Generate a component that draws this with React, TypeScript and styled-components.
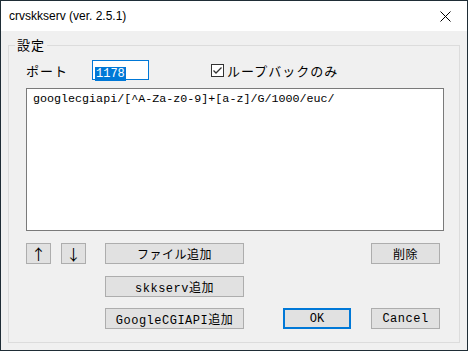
import React from "react";
import styled, { createGlobalStyle } from "styled-components";

const GlobalStyle = createGlobalStyle`
  html, body {
    margin: 0;
    padding: 0;
    background: #f0f0f0;
  }
  * {
    box-sizing: border-box;
  }
`;

const jpFont = `"Noto Sans CJK JP", "Noto Sans", sans-serif`;
const monoFont = `"Liberation Mono", "Noto Sans CJK JP", monospace`;

const Window = styled.div`
  width: 468px;
  height: 351px;
  border: 1px solid #1f2d36;
  display: flex;
  flex-direction: column;
  background: #f0f0f0;
`;

const TitleBar = styled.div`
  height: 30px;
  background: #ffffff;
  display: flex;
  align-items: center;
  justify-content: space-between;
  padding: 0 8px 0 8px;
`;

const Title = styled.span`
  font-family: "Liberation Sans", "Noto Sans", sans-serif;
  font-size: 12px;
  color: #000;
`;

const CloseButton = styled.div`
  width: 22px;
  height: 22px;
  display: flex;
  align-items: center;
  justify-content: center;
  margin-right: 3px;
`;

const Body = styled.div`
  flex: 1;
  padding: 14px 7px 7px 7px;
`;

const GroupBox = styled.div`
  position: relative;
  height: 298px;
  border: 1px solid #dcdcdc;
  padding: 14px 19px 13px 17px;
`;

const Legend = styled.span`
  position: absolute;
  top: -10px;
  left: 6px;
  padding: 0 2px;
  background: #f0f0f0;
  font-family: ${jpFont};
  font-size: 13px;
  letter-spacing: 1px;
  line-height: 18px;
  color: #000;
`;

const TopRow = styled.div`
  display: flex;
  align-items: center;
  height: 20px;
`;

const Label = styled.span`
  font-family: ${jpFont};
  font-size: 13px;
  letter-spacing: 1px;
  color: #000;
  width: 66px;
`;

const PortInput = styled.div`
  width: 57px;
  height: 20px;
  border: 1px solid #0078d7;
  background: #fff;
  padding: 2px 0 0 2px;
`;

const Selected = styled.span`
  display: inline-block;
  background: #0078d7;
  color: #fff;
  font-family: ${monoFont};
  font-size: 12px;
  line-height: 14px;
  padding: 0 1px;
`;

const CheckLabel = styled.label`
  display: flex;
  align-items: center;
  margin-left: 62px;
  font-family: ${jpFont};
  font-size: 13px;
  letter-spacing: 1px;
  color: #000;
`;

const CheckBox = styled.span`
  width: 13px;
  height: 13px;
  border: 1px solid #333;
  background: #fff;
  display: flex;
  align-items: center;
  justify-content: center;
  margin-right: 3px;
`;

const ListArea = styled.div`
  margin-top: 8px;
  width: 418px;
  height: 143px;
  border: 1px solid #7a7a7a;
  background: #fff;
  padding: 2px 6px;
  font-family: ${monoFont};
  font-size: 11.7px;
  line-height: 17px;
  color: #000;
`;

const ButtonGrid = styled.div`
  margin-top: 12px;
  display: grid;
  grid-template-columns: 79px 139px 1fr 88px 69px;
  grid-template-rows: 22px 21px 21px;
  row-gap: 11px;
  align-items: start;
`;

const ArrowCell = styled.div`
  display: flex;
  gap: 10px;
`;

const Button = styled.button<{ $width?: number; $default?: boolean }>`
  width: ${(p) => (p.$width ? `${p.$width}px` : "100%")};
  height: 21px;
  padding: 0;
  margin: 0;
  background: #e1e1e1;
  border: ${(p) => (p.$default ? "2px solid #0078d7" : "1px solid #adadad")};
  font-family: ${monoFont};
  font-size: 12px;
  letter-spacing: ${(p) => (p.$default ? "0" : "0.5px")};
  color: #000;
  display: flex;
  align-items: center;
  justify-content: center;
`;

const ArrowButton = styled(Button)`
  font-family: ${jpFont};
  font-size: 15px;
  letter-spacing: 0;
`;

const Cell = styled.div<{ $col: number; $row: number }>`
  grid-column: ${(p) => p.$col};
  grid-row: ${(p) => p.$row};
`;

export default function App() {
  return (
    <>
      <GlobalStyle />
      <Window>
        <TitleBar>
          <Title>crvskkserv (ver. 2.5.1)</Title>
          <CloseButton>
            <svg width="11" height="11" viewBox="0 0 11 11">
              <path d="M0.5 0.5 L10.5 10.5 M10.5 0.5 L0.5 10.5" stroke="#000" strokeWidth="1" />
            </svg>
          </CloseButton>
        </TitleBar>
        <Body>
          <GroupBox>
            <Legend>設定</Legend>
            <TopRow>
              <Label>ポート</Label>
              <PortInput>
                <Selected>1178</Selected>
              </PortInput>
              <CheckLabel>
                <CheckBox>
                  <svg width="11" height="11" viewBox="0 0 11 11">
                    <path d="M1.5 5.5 L4 8 L9.5 2.5" stroke="#333" strokeWidth="1.3" fill="none" />
                  </svg>
                </CheckBox>
                ループバックのみ
              </CheckLabel>
            </TopRow>
            <ListArea>googlecgiapi/[^A-Za-z0-9]+[a-z]/G/1000/euc/</ListArea>
            <ButtonGrid>
              <Cell $col={1} $row={1}>
                <ArrowCell>
                  <ArrowButton $width={25}>↑</ArrowButton>
                  <ArrowButton $width={25}>↓</ArrowButton>
                </ArrowCell>
              </Cell>
              <Cell $col={2} $row={1}>
                <Button>ファイル追加</Button>
              </Cell>
              <Cell $col={5} $row={1}>
                <Button>削除</Button>
              </Cell>
              <Cell $col={2} $row={2}>
                <Button>skkserv追加</Button>
              </Cell>
              <Cell $col={2} $row={3}>
                <Button>GoogleCGIAPI追加</Button>
              </Cell>
              <Cell $col={4} $row={3}>
                <Button $width={68} $default>
                  OK
                </Button>
              </Cell>
              <Cell $col={5} $row={3}>
                <Button>Cancel</Button>
              </Cell>
            </ButtonGrid>
          </GroupBox>
        </Body>
      </Window>
    </>
  );
}
